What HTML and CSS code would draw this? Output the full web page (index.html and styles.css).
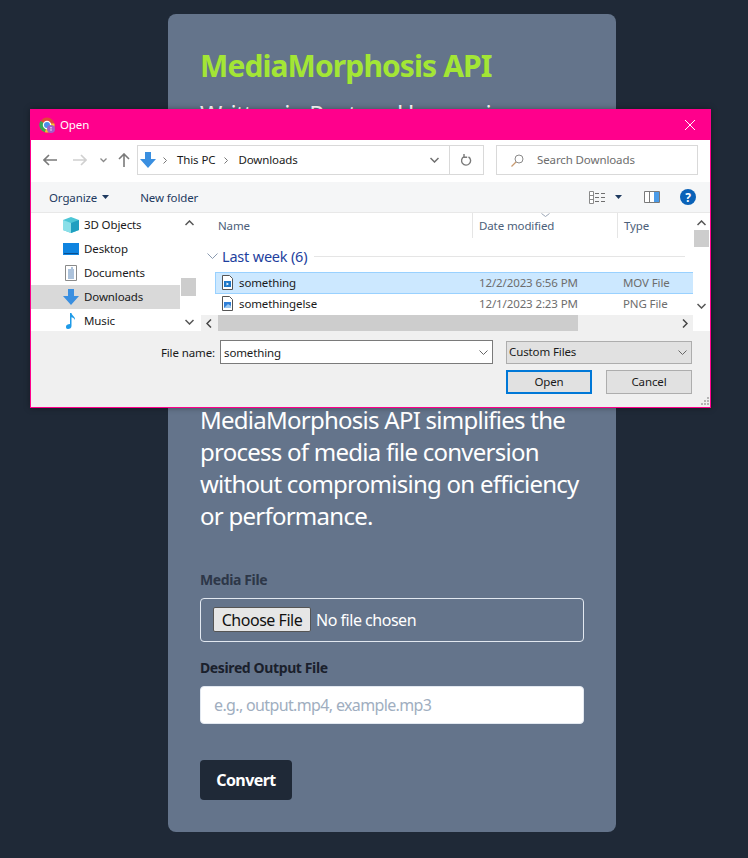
FILE: index.html
```html
<!DOCTYPE html>
<html lang="en">
<head>
<meta charset="UTF-8">
<meta name="viewport" content="width=device-width, initial-scale=1.0">
<title>MediaMorphosis API</title>
<link rel="stylesheet" href="styles.css">
</head>
<body>
  <main class="card">
    <h1 class="title">MediaMorphosis API</h1>
    <p class="intro intro-first">Written in Rust and leveraging asynchronous FFmpeg, this service takes an uploaded file and returns it in whichever format you need, quickly and with no setup at all on your side. It handles video, audio and images through one small endpoint, so your own code stays short and easy to read.</p>
    <p class="intro">MediaMorphosis API simplifies the process of media file conversion without compromising on efficiency or performance.</p>
    <form class="form">
      <label class="label label-muted" for="media">Media File</label>
      <input class="file-input" id="media" type="file">
      <label class="label" for="output">Desired Output File</label>
      <input class="text-input" id="output" type="text" placeholder="e.g., output.mp4, example.mp3">
      <button class="convert" type="button">Convert</button>
    </form>
  </main>

  <div class="dialog">
    <div class="titlebar">
      <svg class="app-icon" width="16" height="16" viewBox="0 0 16 16">
        <circle cx="8" cy="8" r="7.5" fill="#e0483a"/>
        <path d="M8 8 1.5 4A7.5 7.5 0 0 0 6 15.2Z" fill="#3aa655"/>
        <path d="M8 8 6 15.2A7.5 7.5 0 0 0 15.4 6.5H8Z" fill="#f6c62e"/>
        <circle cx="8" cy="8" r="3.6" fill="#4d8fe8" stroke="#fff" stroke-width="1.2"/>
        <circle cx="12" cy="12" r="4" fill="#a05fc8"/>
        <circle cx="12" cy="10.8" r=".7" fill="#fff"/>
        <circle cx="12" cy="13" r=".7" fill="#fff"/>
      </svg>
      <span class="titlebar-text">Open</span>
      <svg class="close-icon" width="10" height="10" viewBox="0 0 10 10"><path d="M0 0 10 10M10 0 0 10" stroke="#fff" fill="none"/></svg>
    </div>

    <div class="navbar">
      <svg class="nav-btn" width="14" height="12" viewBox="0 0 14 12"><path d="M6 1 1 6l5 5M1 6h13" stroke="#7a7a7a" stroke-width="1.6" fill="none"/></svg>
      <svg class="nav-btn nav-forward" width="14" height="12" viewBox="0 0 14 12"><path d="M8 1l5 5-5 5M13 6H0" stroke="#d0d0d0" stroke-width="1.6" fill="none"/></svg>
      <svg class="nav-btn nav-recent" width="7" height="5" viewBox="0 0 7 5"><path d="M.5.5l3 3 3-3" stroke="#8a8a8a" stroke-width="1.3" fill="none"/></svg>
      <svg class="nav-btn nav-up" width="12" height="14" viewBox="0 0 12 14"><path d="M1 6l5-5 5 5M6 1v13" stroke="#7a7a7a" stroke-width="1.6" fill="none"/></svg>
      <div class="address">
        <svg width="16" height="16" viewBox="0 0 16 16"><path d="M5 0h6v7h5l-8 9-8-9h5Z" fill="#3a8fe0"/></svg>
        <svg class="crumb-sep" width="4" height="7" viewBox="0 0 4 7"><path d="M.5.5l3 3-3 3" stroke="#777" fill="none"/></svg>
        <span class="crumb">This PC</span>
        <svg class="crumb-sep" width="4" height="7" viewBox="0 0 4 7"><path d="M.5.5l3 3-3 3" stroke="#777" fill="none"/></svg>
        <span class="crumb">Downloads</span>
        <svg class="address-drop" width="9" height="6" viewBox="0 0 9 6"><path d="M.5 1l4 4 4-4" stroke="#6f6f6f" stroke-width="1.5" fill="none"/></svg>
        <div class="refresh">
          <svg width="11" height="12" viewBox="0 0 11 12"><path d="M3 2.600A4.500 4.500 0 1 0 7.500 2.800M3 0v3.200H6.200" stroke="#7a7a7a" stroke-width="1.4" fill="none"/></svg>
        </div>
      </div>
      <div class="search">
        <svg width="13" height="13" viewBox="0 0 13 13"><circle cx="8" cy="5" r="4" stroke="#8a8a8a" fill="none"/><path d="M5 8 .5 12.500" stroke="#c89a70" stroke-width="1.2"/></svg>
        <span class="search-text">Search Downloads</span>
      </div>
    </div>

    <div class="cmdbar">
      <span class="cmd">Organize</span>
      <svg class="caret" width="7" height="4" viewBox="0 0 7 4"><path d="M0 0h7L3.500 4Z" fill="#1e3a5f"/></svg>
      <span class="cmd cmd-new">New folder</span>
      <svg class="view-icon" width="17" height="13" viewBox="0 0 17 13">
        <path d="M.5.500h4v12h-4ZM.5 4.500h4M.5 8.500h4" stroke="#8a8a8a" fill="#fff"/>
        <path d="M6 2.500h4M12 2.500h4M6 6.500h4M12 6.500h4M6 10.500h4M12 10.500h4" stroke="#6f6f6f"/>
      </svg>
      <svg class="caret caret-view" width="7" height="4" viewBox="0 0 7 4"><path d="M0 0h7L3.500 4Z" fill="#1e3a5f"/></svg>
      <svg class="pane-icon" width="16" height="12" viewBox="0 0 16 12"><path d="M.5.500h15v11H.5Z" fill="#fff" stroke="#7a7a7a"/><path d="M5.500 1v10" stroke="#7a7a7a"/><path d="M10 1h5v10h-5Z" fill="#4a9be8"/></svg>
      <svg class="help-icon" width="16" height="16" viewBox="0 0 16 16"><circle cx="8" cy="8" r="8" fill="#0a62b8"/><text class="help-mark" x="8" y="12.500" text-anchor="middle">?</text></svg>
    </div>

    <div class="browser">
      <ul class="nav-tree">
        <li class="tree-item">
          <svg width="16" height="16" viewBox="0 0 16 16"><path d="M8 0 16 3v10l-8 3-8-3V3Z" fill="#4cc6d6"/><path d="M8 6v10l-8-3V3Z" fill="#8adfe8"/><path d="M8 6 16 3v10l-8 3Z" fill="#1f9fc0"/></svg>
          <span>3D Objects</span>
        </li>
        <li class="tree-item">
          <svg width="16" height="16" viewBox="0 0 16 16"><path d="M0 2h16v12H0Z" fill="#0f84e0"/><path d="M1 12.500h14" stroke="#0a4f90"/></svg>
          <span>Desktop</span>
        </li>
        <li class="tree-item">
          <svg width="16" height="16" viewBox="0 0 16 16"><path d="M2.500.5h11v15h-11Z" fill="#fff" stroke="#8a8a8a"/><path d="M8 3h2M5 5h6M5 7h6M5 9h6M5 11h6M5 13h6" stroke="#5a86b8"/></svg>
          <span>Documents</span>
        </li>
        <li class="tree-item tree-item-active">
          <svg width="16" height="16" viewBox="0 0 16 16"><path d="M5 0h6v7h5l-8 9-8-9h5Z" fill="#3a8fe0"/></svg>
          <span>Downloads</span>
        </li>
        <li class="tree-item">
          <svg width="16" height="16" viewBox="0 0 16 16"><path d="M7 0h1.500c.3 3 4 3.500 3.500 7-.8-2-2.500-2.500-3.500-2.700V13c0 1.700-1.500 3-3.500 3S3 15 3 13.500 4.800 11 7 11Z" fill="#1f9be8"/></svg>
          <span>Music</span>
        </li>
      </ul>

      <div class="scroll-v scroll-tree">
        <svg class="arrow" width="9" height="6" viewBox="0 0 9 6"><path d="M.5 5l4-4 4 4" stroke="#555" stroke-width="1.500" fill="none"/></svg>
        <div class="thumb-v thumb-tree"></div>
        <svg class="arrow arrow-end" width="9" height="6" viewBox="0 0 9 6"><path d="M.5 1l4 4 4-4" stroke="#555" stroke-width="1.500" fill="none"/></svg>
      </div>

      <div class="files">
        <div class="files-top">
          <div class="files-main">
            <div class="file-head">
              <span class="head-cell head-name">Name</span>
              <span class="head-cell head-date">
                <svg class="sort-mark" width="9" height="4" viewBox="0 0 9 4"><path d="M.5.500l4 3 4-3" stroke="#9aa5b5" fill="none"/></svg>
                Date modified
              </span>
              <span class="head-cell head-type">Type</span>
            </div>
            <div class="group">
              <svg width="11" height="6" viewBox="0 0 11 6"><path d="M.5.500l5 5 5-5" stroke="#8a9ab0" fill="none"/></svg>
              <span class="group-name">Last week (6)</span>
              <span class="group-line"></span>
            </div>
            <div class="file-row file-row-selected">
              <span class="cell-name">
                <svg width="11" height="15" viewBox="0 0 11 15"><path d="M.5.500h7l3 3v11H.5Z" fill="#fff" stroke="#555"/><path d="M2 6h7v6H2Z" fill="#1e78c8"/><path d="M4.500 7.500 7 9l-2.500 1.500Z" fill="#fff"/></svg>
                something
              </span>
              <span class="cell-date">12/2/2023 6:56 PM</span>
              <span class="cell-type">MOV File</span>
            </div>
            <div class="file-row">
              <span class="cell-name">
                <svg width="11" height="15" viewBox="0 0 11 15"><path d="M.5.500h7l3 3v11H.5Z" fill="#fff" stroke="#555"/><path d="M2 6h7v6H2Z" fill="#2f7fd8"/><path d="M2 12l4-4 3 2v2Z" fill="#9cc8f0"/></svg>
                somethingelse
              </span>
              <span class="cell-date">12/1/2023 2:23 PM</span>
              <span class="cell-type">PNG File</span>
            </div>
          </div>
          <div class="scroll-v scroll-list">
            <svg class="arrow" width="9" height="6" viewBox="0 0 9 6"><path d="M.5 5l4-4 4 4" stroke="#555" stroke-width="1.500" fill="none"/></svg>
            <div class="thumb-v thumb-list"></div>
            <svg class="arrow arrow-end" width="9" height="6" viewBox="0 0 9 6"><path d="M.5 1l4 4 4-4" stroke="#555" stroke-width="1.500" fill="none"/></svg>
          </div>
        </div>
        <div class="scroll-h">
          <svg class="arrow-h" width="6" height="9" viewBox="0 0 6 9"><path d="M5 .5l-4 4 4 4" stroke="#444" stroke-width="1.500" fill="none"/></svg>
          <div class="thumb-h"></div>
          <svg class="arrow-h arrow-h-end" width="6" height="9" viewBox="0 0 6 9"><path d="M1 .5l4 4-4 4" stroke="#444" stroke-width="1.500" fill="none"/></svg>
        </div>
      </div>
    </div>

    <div class="footer">
      <div class="footer-row">
        <span class="name-label">File name:</span>
        <div class="name-box">
          <span>something</span>
          <svg width="9" height="5" viewBox="0 0 9 5"><path d="M.5.500l4 4 4-4" stroke="#666" fill="none"/></svg>
        </div>
        <div class="type-box">
          <span class="type-text">Custom Files</span>
          <svg width="9" height="5" viewBox="0 0 9 5"><path d="M.5.500l4 4 4-4" stroke="#666" fill="none"/></svg>
        </div>
      </div>
      <div class="footer-actions">
        <div class="win-btn win-btn-default">Open</div>
        <div class="win-btn">Cancel</div>
      </div>
      <svg class="grip" width="9" height="9" viewBox="0 0 9 9"><path d="M7 0h2v2H7ZM4 3h2v2H4ZM7 3h2v2H7ZM1 6h2v2H1ZM4 6h2v2H4ZM7 6h2v2H7Z" fill="#b5b5b5"/></svg>
    </div>
  </div>
</body>
</html>
```

FILE: styles.css
```css
* {
  box-sizing: border-box;
}
body {
  margin: 0;
  padding: 14px 0 26px;
  background-color: #1f2937;
  font-family: "Noto Sans", "Open Sans", sans-serif;
}
ul {
  margin: 0;
  padding: 0;
  list-style: none;
}

/* page behind the dialog */
.card {
  width: 448px;
  margin-left: 168px;
  padding: 32px;
  border-radius: 8px;
  background-color: #64748b;
  letter-spacing: -0.024em;
}
.title {
  margin: 0 0 14px;
  padding-top: 2px;
  color: #a3e635;
  font-size: 30px;
  line-height: 36px;
  font-weight: 700;
  letter-spacing: -0.03em;
}
.intro {
  margin: 0 0 16px;
  color: #fff;
  font-size: 24px;
  line-height: 32px;
  letter-spacing: -0.031em;
}
.intro-first {
  margin-bottom: 18px;
}
.form {
  display: flex;
  flex-direction: column;
  align-items: flex-start;
  margin-top: 38px;
}
.label {
  margin-bottom: 8px;
  color: #1a202c;
  font-size: 14px;
  line-height: 20px;
  font-weight: 700;
}
.label-muted {
  color: #2d3748;
}
.file-input {
  width: 100%;
  height: 44px;
  margin-bottom: 16px;
  padding: 8px 12px;
  border: 1px solid #e2e8f0;
  border-radius: 4px;
  color: #fff;
  font-family: inherit;
  font-size: 16px;
  letter-spacing: -0.03em;
}
.file-input::file-selector-button {
  width: 98px;
  height: 25px;
  margin-right: 5px;
  padding: 0;
  border: 1px solid #555;
  border-radius: 2px;
  background-color: #e6e6e6;
  color: #111;
  font-family: inherit;
  font-size: 16px;
  letter-spacing: -0.03em;
}
.text-input {
  width: 100%;
  height: 38px;
  margin-bottom: 36px;
  padding: 0 13px;
  border: 1px solid #e2e8f0;
  border-radius: 4px;
  background-color: #fff;
  font-family: inherit;
  font-size: 16px;
  letter-spacing: -0.04em;
}
.text-input::placeholder {
  color: #a0aec0;
}
.convert {
  width: 92px;
  height: 40px;
  padding: 0;
  border: none;
  border-radius: 4px;
  background-color: #1f2937;
  color: #fff;
  font-family: inherit;
  font-size: 16px;
  font-weight: 700;
  letter-spacing: -0.035em;
}

/* file picker window */
.dialog {
  position: absolute;
  left: 30px;
  top: 109px;
  display: flex;
  flex-direction: column;
  width: 681px;
  height: 299px;
  border: 1px solid #ff008c;
  background-color: #f0f0f0;
  color: #1a1a1a;
  font-size: 11.5px;
  letter-spacing: -0.01em;
  box-shadow: 0 0 6px rgba(0, 0, 0, 0.35);
}
.titlebar {
  display: flex;
  align-items: center;
  flex: 0 0 30px;
  padding: 0 15px 0 8px;
  background-color: #ff008c;
  color: #fff;
}
.titlebar-text {
  margin: 0 0 2px 5px;
}
.close-icon {
  margin-left: auto;
}

.navbar {
  display: flex;
  align-items: center;
  flex: 0 0 42px;
  padding: 0 12px 2px 0;
  background-color: #fff;
}
.nav-btn {
  flex: none;
  margin-left: 12px;
}
.nav-forward {
  margin-left: 16px;
}
.nav-recent {
  margin-left: 13px;
}
.nav-up {
  margin-left: 11px;
  margin-right: 7px;
}
.address {
  display: flex;
  align-items: center;
  width: 347px;
  height: 30px;
  padding-left: 2px;
  border: 1px solid #d9d9d9;
}
.crumb-sep {
  margin: 0 10px 0 7px;
}
.crumb {
  margin: 0 2px 2px 0;
}
.address-drop {
  margin-left: auto;
  margin-right: 10px;
}
.refresh {
  display: flex;
  align-items: center;
  justify-content: center;
  width: 34px;
  height: 100%;
  border-left: 1px solid #d9d9d9;
}
.search {
  display: flex;
  align-items: center;
  gap: 13px;
  width: 202px;
  height: 30px;
  margin-left: 12px;
  padding-left: 14px;
  border: 1px solid #d9d9d9;
  color: #6d6d6d;
}
.search-text {
  margin-bottom: 2px;
}

.cmdbar {
  display: flex;
  align-items: center;
  flex: 0 0 31px;
  padding: 0 14px 0 18px;
  background-color: #f5f6f7;
  color: #1e3a5f;
  border-bottom: 1px solid #e8e8e8;
}
.caret {
  margin-left: 5px;
}
.cmd-new {
  margin-left: 31px;
}
.view-icon {
  margin-left: auto;
}
.caret-view {
  margin-left: 9px;
}
.pane-icon {
  margin-left: 22px;
}
.help-icon {
  margin-left: 20px;
}
.help-mark {
  fill: #fff;
  font-size: 12px;
  font-weight: 700;
}

.browser {
  display: flex;
  flex: 0 0 118px;
  padding-right: 1px;
  overflow: hidden;
  background-color: #fff;
}
.nav-tree {
  flex: none;
  width: 149px;
}
.tree-item {
  display: flex;
  align-items: center;
  height: 24px;
  padding-left: 32px;
}
.tree-item span {
  margin: 0 0 2px 5px;
}
.tree-item-active {
  background-color: #d9d9d9;
}
.scroll-v {
  display: flex;
  flex-direction: column;
  align-items: center;
  flex: 0 0 16px;
}
.arrow {
  flex: none;
  margin-top: 7px;
}
.arrow-end {
  margin-top: auto;
  margin-bottom: 6px;
}
.thumb-v {
  width: 15px;
  background-color: #cdcdcd;
}
.thumb-tree {
  align-self: flex-start;
  height: 18px;
  margin-top: 52px;
}
.scroll-tree {
  margin: 0 4px 0 1px;
  background-color: #fff;
}
.files {
  display: flex;
  flex-direction: column;
  flex: 1;
  min-width: 0;
}
.files-top {
  display: flex;
  flex: 0 0 102px;
}
.files-main {
  flex: 1;
  min-width: 0;
  overflow: hidden;
}
.scroll-list {
  background-color: #fff;
}
.thumb-list {
  align-self: flex-end;
  height: 17px;
  margin-top: 4px;
}
.file-head {
  display: flex;
  height: 25px;
  color: #4c607a;
}
.head-cell {
  height: 100%;
  line-height: 26px;
  white-space: nowrap;
}
.head-name {
  width: 271px;
  padding-left: 17px;
}
.head-date {
  position: relative;
  width: 145px;
  padding-left: 6px;
  border-left: 1px solid #e5e5e5;
}
.sort-mark {
  position: absolute;
  left: 68px;
  top: 0;
}
.head-type {
  flex: 1;
  padding-left: 6px;
  border-left: 1px solid #e5e5e5;
}
.group {
  display: flex;
  align-items: center;
  height: 34px;
  padding: 2px 8px 0 6px;
}
.group-name {
  margin-left: 4px;
  color: #1e3f9e;
  font-size: 14.5px;
  letter-spacing: -0.2px;
}
.group-line {
  flex: 1;
  height: 1px;
  margin-left: 7px;
  background-color: #e5e5e5;
}
.file-row {
  display: flex;
  align-items: center;
  height: 21px;
  margin-left: 14px;
  border: 1px solid transparent;
  border-right: none;
  white-space: nowrap;
}
.file-row-selected {
  height: 22px;
  border-color: #99d1ff;
  background-color: #cce8ff;
}
.cell-name {
  display: flex;
  align-items: center;
  gap: 6px;
  width: 263px;
  padding: 0 0 2px 6px;
}
.cell-date {
  width: 144px;
  padding-bottom: 2px;
  color: #6d6d6d;
}
.cell-type {
  padding-bottom: 2px;
  color: #6d6d6d;
}
.scroll-h {
  display: flex;
  align-items: center;
  flex: 0 0 16px;
  margin-right: 16px;
  background-color: #f0f0f0;
}
.arrow-h {
  flex: none;
  margin-left: 5px;
}
.arrow-h-end {
  margin-left: auto;
  margin-right: 5px;
}
.thumb-h {
  width: 360px;
  height: 100%;
  margin-left: 6px;
  background-color: #cdcdcd;
}

.footer {
  position: relative;
  flex: 1;
  padding: 9px 18px 0 0;
}
.footer-row {
  display: flex;
  align-items: center;
  height: 24px;
}
.name-label {
  width: 189px;
  padding-right: 5px;
  text-align: right;
}
.name-box {
  display: flex;
  align-items: center;
  justify-content: space-between;
  width: 273px;
  height: 24px;
  padding: 0 4px 0 3px;
  border: 1px solid #7a7a7a;
  background-color: #fff;
}
.type-box {
  display: flex;
  align-items: center;
  justify-content: space-between;
  width: 186px;
  height: 23px;
  margin-left: 13px;
  padding: 0 4px 0 2px;
  border: 1px solid #adadad;
  background-color: #e1e1e1;
}
.type-text {
  margin-bottom: 2px;
}
.footer-actions {
  display: flex;
  justify-content: flex-end;
  gap: 14px;
  margin-top: 6px;
}
.win-btn {
  width: 86px;
  height: 24px;
  border: 1px solid #adadad;
  background-color: #e1e1e1;
  line-height: 22px;
  text-align: center;
}
.win-btn-default {
  border: 2px solid #0078d7;
  line-height: 20px;
}
.grip {
  position: absolute;
  right: 1px;
  bottom: 1px;
}
```
